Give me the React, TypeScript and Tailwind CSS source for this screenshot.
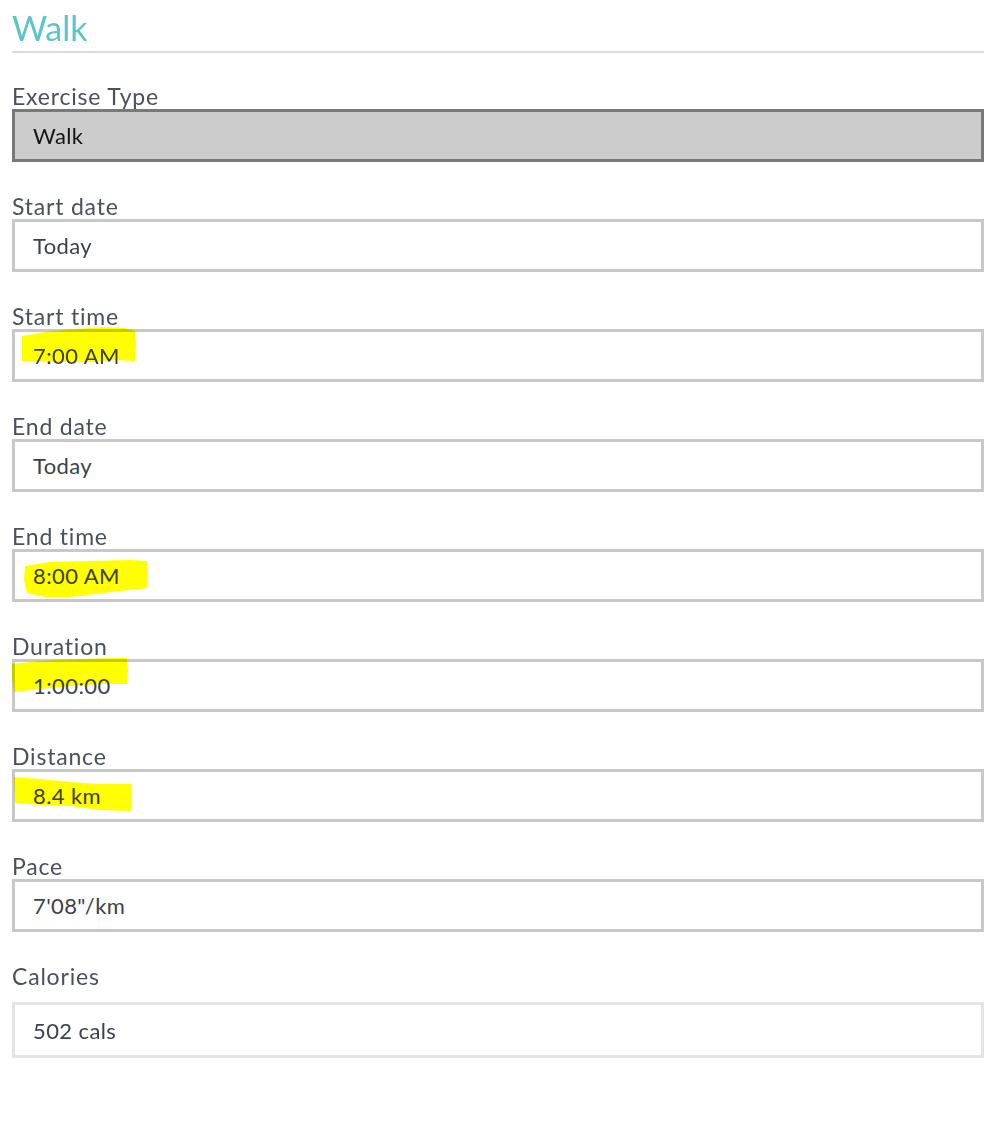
import React from 'react';

type Field = {
  label: string;
  value: string;
  top: number;
  mark?: string;
};

const FIELDS: Field[] = [
  { label: 'Start date', value: 'Today', top: 219 },
  {
    label: 'Start time',
    value: '7:00 AM',
    top: 329,
    mark: '22,336 45,332 75,329 103,327 125,328 135,331 136,345 135,361 115,360 90,362 50,362 22,361',
  },
  { label: 'End date', value: 'Today', top: 439 },
  {
    label: 'End time',
    value: '8:00 AM',
    top: 549,
    mark: '25,566 50,562 90,561 130,560 147,561 148,575 147,588 120,591 95,594 70,597 45,597 27,593 24,580',
  },
  {
    label: 'Duration',
    value: '1:00:00',
    top: 659,
    mark: '12,664 40,661 80,659 115,658 127,658 128,670 127,684 100,684 70,686 40,689 14,692 12,680',
  },
  {
    label: 'Distance',
    value: '8.4 km',
    top: 769,
    mark: '14,777 40,779 70,782 100,784 131,784 131,798 131,811 100,810 70,806 40,805 15,803',
  },
  { label: 'Pace', value: '7\'08"/km', top: 879 },
];

// highlighter strokes, points are in page coordinates
const Marker = ({ top, points }: { top: number; points: string }) => (
  <svg
    className="pointer-events-none absolute left-0 top-[-12px] mix-blend-multiply"
    width={160}
    height={70}
    viewBox={`12 ${top - 12} 160 70`}
  >
    <polygon points={points} fill="#ffff00" />
  </svg>
);

const Label = ({ children }: { children: React.ReactNode }) => (
  <div className="h-[26px] text-[23px] leading-[26px] tracking-[0.8px] text-[#4a505c]">{children}</div>
);

const FormField = ({ field }: { field: Field }) => (
  <div className="mb-[31px]">
    <Label>{field.label}</Label>
    <div className="relative">
      <div className="flex h-[53px] items-center border-[3px] border-[#c8c8c8] bg-white pl-[18px] text-[22px] tracking-[0.4px] text-[#3b414d]">
        {field.value}
      </div>
      {field.mark && <Marker top={field.top} points={field.mark} />}
    </div>
  </div>
);

const App = () => {
  return (
    <div className="min-h-[1139px] bg-white px-3 font-['Lato','Open_Sans',sans-serif]">
      <h1 className="pt-[8px] text-[34px] leading-[39px] font-normal text-[#5cc5c5]">Walk</h1>
      <div className="mt-[4px] h-[2px] bg-[#dcdce0]" />

      <div className="mt-[30px] mb-[31px]">
        <Label>Exercise Type</Label>
        <div className="flex h-[53px] items-center border-[3px] border-[#797979] bg-[#cccccc] pl-[18px] text-[22px] tracking-[0.4px] text-[#141414]">
          Walk
        </div>
      </div>

      {FIELDS.map((f) => (
        <FormField key={f.label} field={f} />
      ))}

      <div>
        <Label>Calories</Label>
        <div className="mt-[13px] flex h-[56px] items-center border-[3px] border-[#e4e4e4] bg-white pl-[18px] text-[22px] tracking-[0.4px] text-[#3b414d]">
          502 cals
        </div>
      </div>
    </div>
  );
};

export default App;
